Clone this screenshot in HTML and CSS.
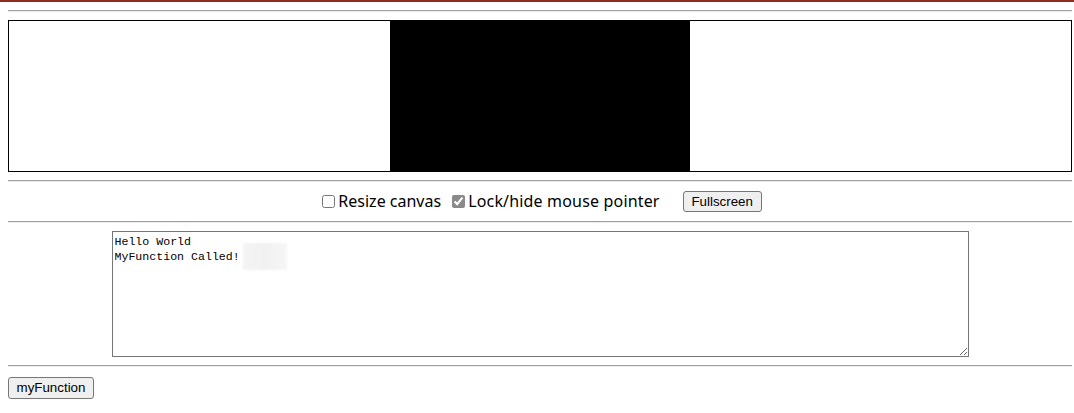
FILE: index.html
```html
<!DOCTYPE html>
<html>
<head>
<meta charset="utf-8">
<title>Emscripten-Generated Code</title>
<link rel="stylesheet" href="styles.css">
</head>
<body>
<div class="topbar"></div>
<div class="page">
  <hr class="rule">
  <div class="canvas-frame"><div class="canvas"></div></div>
  <hr class="rule">
  <div class="controls">
    <label class="opt"><input type="checkbox" class="check">Resize canvas</label>
    <label class="opt"><input type="checkbox" class="check check-on" checked><span class="wide">Lock/hide mouse pointer</span></label>
    <button class="btn btn-full" type="button">Fullscreen</button>
  </div>
  <hr class="rule">
  <div class="output-wrap">
    <textarea class="output" rows="8">Hello World
MyFunction Called!</textarea>
    <div class="smudge"></div>
  </div>
  <hr class="rule">
  <div class="actions">
    <button class="btn btn-fn" type="button">myFunction</button>
  </div>
</div>
</body>
</html>
```

FILE: styles.css
```css
html, body {
  margin: 0;
  padding: 0;
  background: #ffffff;
}

body {
  font-family: "Noto Sans", "Liberation Sans", Arial, sans-serif;
  color: #000;
}

.topbar {
  height: 2px;
  background: #8b2c1c;
}

.page {
  margin-left: 8px;
  width: 1064px;
}

.rule {
  height: 0;
  margin: 8px 0;
  border: 0;
  border-top: 1px solid #a0a0a0;
  border-bottom: 1px solid #ececec;
}

.canvas-frame {
  border: 1px solid #000;
}

.canvas {
  width: 300px;
  height: 150px;
  margin: 0 auto;
  background: #000;
}

.controls {
  height: 23px;
  display: flex;
  justify-content: center;
  align-items: center;
  font-size: 16px;
  line-height: 23px;
}

.opt {
  display: flex;
  align-items: center;
  margin-right: 7px;
}

.wide {
  letter-spacing: 0.17px;
}

.check {
  width: 13px;
  height: 13px;
  margin: 0 3px 0 4px;
}

.check-on {
  accent-color: #8a8a8a;
}

.btn {
  font-family: "Liberation Sans", Arial, sans-serif;
  font-size: 13.33px;
  color: #000;
  background: #efefef;
  border: 1px solid #767676;
  border-radius: 3px;
  padding: 0;
  text-align: center;
}

.btn-full {
  width: 79px;
  height: 21px;
  margin-left: 16px;
}

.output-wrap {
  position: relative;
}

.output {
  display: block;
  box-sizing: border-box;
  width: 857px;
  height: 126px;
  margin: 0 auto;
  padding: 2px;
  border: 1px solid #767676;
  font-family: "Liberation Mono", "Courier New", monospace;
  font-size: 11.6px;
  line-height: 15px;
  color: #000;
  resize: both;
}

.smudge {
  position: absolute;
  left: 235px;
  top: 12px;
  width: 44px;
  height: 27px;
  background: linear-gradient(90deg, #f4f4f4 0%, #f1f1f1 50%, #f6f6f6 100%);
  filter: blur(1px);
}

.actions {
  height: 30px;
}

.btn-fn {
  width: 86px;
  height: 22px;
}
```
